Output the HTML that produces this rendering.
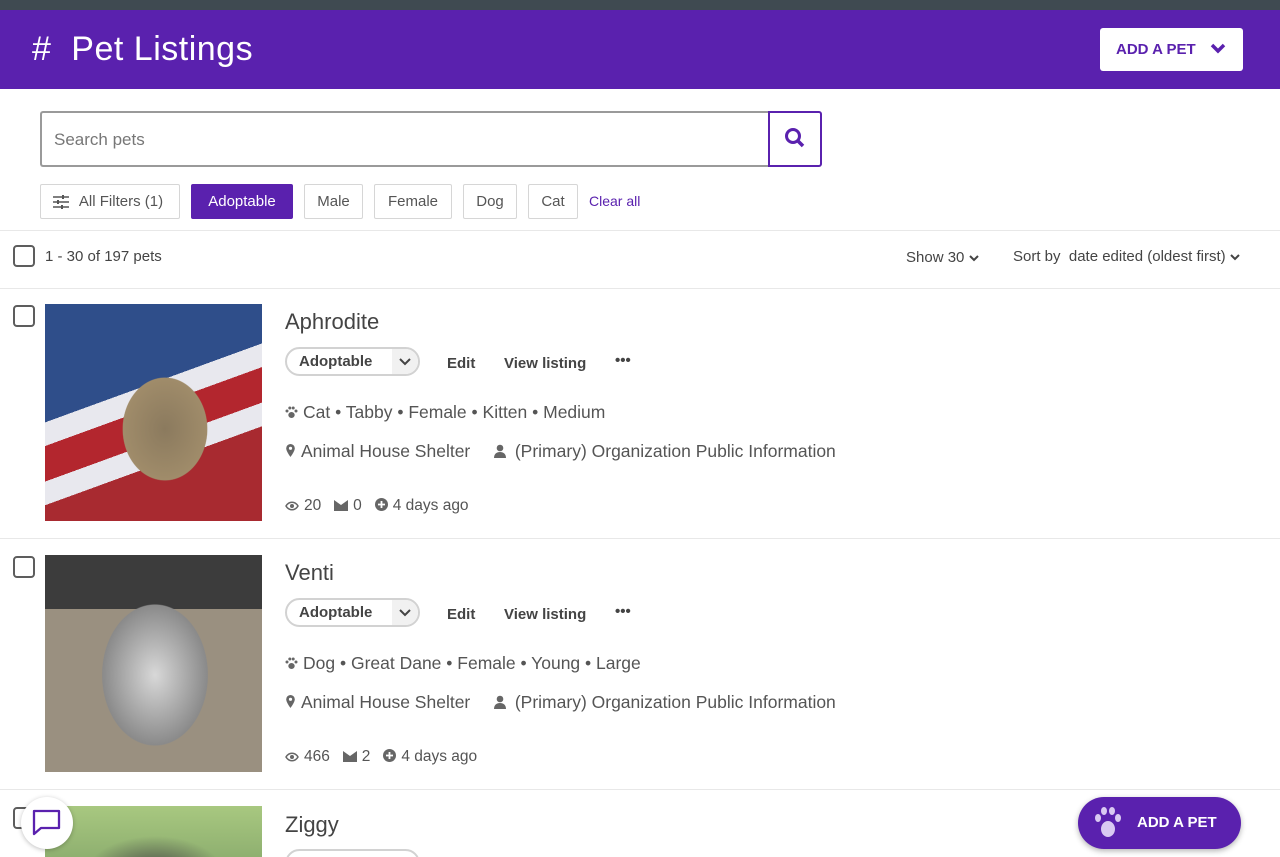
<!DOCTYPE html>
<html><head><meta charset="utf-8"><style>
*{box-sizing:border-box;margin:0;padding:0}
html,body{width:1280px;height:857px;overflow:hidden}
body{background:#fff;font-family:"Liberation Sans",sans-serif;color:#4d4751;position:relative}
.top{position:absolute;left:0;top:0;width:1280px;height:10px;background:#3f4a51}
.hdr{position:absolute;left:0;top:10px;width:1280px;height:79px;background:#5a21ae;color:#fff}
.hdr h1{position:absolute;left:32px;top:20px;font-weight:normal;font-size:34px;letter-spacing:.5px}
.addbtn{position:absolute;left:1100px;top:18px;width:143px;height:43px;background:#fff;border-radius:3px;color:#5a21ae;font-weight:bold;font-size:15px;line-height:43px;padding-left:16px}
.search{position:absolute;left:40px;top:111px;width:730px;height:56px;border:2px solid #9a9a9a;border-right:none;border-radius:3px 0 0 3px;font-size:17px;color:#777;padding:17px 12px}
.sbtn{position:absolute;left:768px;top:111px;width:54px;height:56px;border:2px solid #5a21ae;border-radius:0 3px 3px 0}
.chip{position:absolute;top:184px;height:35px;border:1px solid #d6d6d6;border-radius:2px;font-size:15px;line-height:33px;text-align:center;color:#555}
.line{position:absolute;left:0;width:1280px;height:1px;background:#e8e8e8}
.cb{position:absolute;width:22px;height:22px;border:2px solid #5d5d5d;border-radius:4px}
.photo{position:absolute;left:45px;width:217px;height:217px;overflow:hidden}
.name{position:absolute;left:285px;font-size:22px;color:#444}
.pill{position:absolute;left:285px;width:135px;height:29px;border:2px solid #d2d2d2;border-radius:15px;font-size:15px;font-weight:bold;line-height:25px;padding-left:12px;color:#444;overflow:hidden}
.pill span{position:absolute;right:0;top:0;width:26px;height:25px;background:#f1f1f1;text-align:center}
.act{position:absolute;font-size:15px;font-weight:bold;color:#444}
.info{position:absolute;left:285px;font-size:17.5px;color:#555;white-space:nowrap}
.meta{position:absolute;left:285px;font-size:15.5px;color:#555;white-space:nowrap}
.i{display:inline-block;vertical-align:-1px;margin-right:5px}
</style></head><body>
<div class="top"></div>
<div class="hdr"><h1>#&nbsp; Pet Listings</h1>
<div class="addbtn">ADD A PET <svg width="16" height="12" viewBox="0 0 16 12" style="position:absolute;left:110px;top:15px"><path d="M2 2l6 6 6-6" stroke="#5a21ae" stroke-width="3.5" fill="none"/></svg></div></div>
<div class="search">Search pets</div>
<div class="sbtn"><svg width="54" height="56" viewBox="0 0 54 56" style="position:absolute;left:-2px;top:-2px"><circle cx="25" cy="25" r="6.5" stroke="#5a21ae" stroke-width="3" fill="none"/><path d="M30 30l5 5" stroke="#5a21ae" stroke-width="3.5"/></svg></div>
<div class="chip" style="left:40px;width:140px;padding-left:22px"><svg width="16" height="14" viewBox="0 0 16 14" style="position:absolute;left:12px;top:10px"><path d="M0 2h16M0 7h16M0 12h16" stroke="#555" stroke-width="1.5"/><path d="M10 0v4M5 5v4M9 10v4" stroke="#555" stroke-width="2"/></svg>All Filters (1)</div>
<div class="chip" style="left:191px;width:102px;background:#5a21ae;border-color:#5a21ae;color:#fff">Adoptable</div>
<div class="chip" style="left:304px;width:59px">Male</div>
<div class="chip" style="left:374px;width:78px">Female</div>
<div class="chip" style="left:463px;width:54px">Dog</div>
<div class="chip" style="left:528px;width:50px">Cat</div>
<div style="position:absolute;left:589px;top:193px;font-size:14px;color:#5a21ae">Clear all</div>
<div class="line" style="top:230px"></div>
<div class="cb" style="left:13px;top:245px"></div>
<div style="position:absolute;left:45px;top:248px;font-size:15px;color:#444">1 - 30 of 197 pets</div>
<div style="position:absolute;left:906px;top:249px;font-size:15px;color:#444">Show 30 <svg width="10" height="8" viewBox="0 0 10 8"><path d="M1 2l4 4 4-4" stroke="#444" stroke-width="2" fill="none"/></svg></div>
<div style="position:absolute;left:1013px;top:248px;font-size:15px;color:#444">Sort by &nbsp;date edited (oldest first) <svg width="10" height="8" viewBox="0 0 10 8"><path d="M1 2l4 4 4-4" stroke="#444" stroke-width="2" fill="none"/></svg></div>
<div class="line" style="top:288px"></div>

<div class="cb" style="left:13px;top:305px"></div>
<div class="photo" style="top:304px;background:radial-gradient(ellipse 70px 85px at 120px 125px,#8b7a5e,#a08c6a 60%,transparent 61%),linear-gradient(160deg,#2f4e8a 0 40%,#e8e8ee 40% 48%,#b3262e 48% 60%,#e8e8ee 60% 68%,#a82a30 68%)"></div>
<div class="name" style="top:309px">Aphrodite</div>
<div class="pill" style="top:347px">Adoptable<span><svg width="12" height="8" viewBox="0 0 12 8"><path d="M1 1l5 5 5-5" stroke="#444" stroke-width="2" fill="none"/></svg></span></div>
<div class="act" style="left:447px;top:355px">Edit</div><div class="act" style="left:504px;top:355px">View listing</div><div class="act" style="left:615px;top:352px">•••</div>
<div class="info" style="top:402px"><svg class="i" width="13" height="13" viewBox="0 0 13 13" fill="#666"><ellipse cx="6.5" cy="9" rx="3.2" ry="3"/><circle cx="2" cy="5" r="1.5"/><circle cx="4.8" cy="2" r="1.5"/><circle cx="8.2" cy="2" r="1.5"/><circle cx="11" cy="5" r="1.5"/></svg>Cat • Tabby • Female • Kitten • Medium</div>
<div class="info" style="top:441px"><svg class="i" width="11" height="15" viewBox="0 0 11 15"><path d="M5.5 1a4.3 4.3 0 0 1 4.3 4.3C9.8 8.5 5.5 14 5.5 14S1.2 8.5 1.2 5.3A4.3 4.3 0 0 1 5.5 1z" fill="#666"/><circle cx="5.5" cy="5.3" r="1.6" fill="#fff"/></svg>Animal House Shelter &nbsp; <svg class="i" width="14" height="14" viewBox="0 0 14 14" fill="#666" style="margin:0 8px 0 8px"><circle cx="7" cy="4" r="3.3"/><path d="M1 14c0-4 2.5-6 6-6s6 2 6 6z"/></svg>(Primary) Organization Public Information</div>
<div class="meta" style="top:497px"><svg class="i" width="14" height="10" viewBox="0 0 14 10"><path d="M1 5c3-5 9-5 12 0-3 5-9 5-12 0z" stroke="#666" stroke-width="1.5" fill="none"/><circle cx="7" cy="5" r="2" fill="#666"/></svg>20 &nbsp; <svg class="i" width="14" height="11" viewBox="0 0 14 11" fill="#666"><path d="M0 0l7 5 7-5v11H0z"/></svg>0 &nbsp; <svg class="i" width="13" height="13" viewBox="0 0 13 13"><circle cx="6.5" cy="6.5" r="6.5" fill="#666"/><path d="M6.5 3v7M3 6.5h7" stroke="#fff" stroke-width="1.8"/></svg>4 days ago</div>
<div class="line" style="top:538px"></div>

<div class="cb" style="left:13px;top:556px"></div>
<div class="photo" style="top:555px;background:radial-gradient(ellipse 75px 100px at 110px 120px,#d8d8d8,#8a8a8a 70%,transparent 71%),linear-gradient(180deg,#3c3c3c 0 25%,#9a9080 25%)"></div>
<div class="name" style="top:560px">Venti</div>
<div class="pill" style="top:598px">Adoptable<span><svg width="12" height="8" viewBox="0 0 12 8"><path d="M1 1l5 5 5-5" stroke="#444" stroke-width="2" fill="none"/></svg></span></div>
<div class="act" style="left:447px;top:606px">Edit</div><div class="act" style="left:504px;top:606px">View listing</div><div class="act" style="left:615px;top:603px">•••</div>
<div class="info" style="top:653px"><svg class="i" width="13" height="13" viewBox="0 0 13 13" fill="#666"><ellipse cx="6.5" cy="9" rx="3.2" ry="3"/><circle cx="2" cy="5" r="1.5"/><circle cx="4.8" cy="2" r="1.5"/><circle cx="8.2" cy="2" r="1.5"/><circle cx="11" cy="5" r="1.5"/></svg>Dog • Great Dane • Female • Young • Large</div>
<div class="info" style="top:692px"><svg class="i" width="11" height="15" viewBox="0 0 11 15"><path d="M5.5 1a4.3 4.3 0 0 1 4.3 4.3C9.8 8.5 5.5 14 5.5 14S1.2 8.5 1.2 5.3A4.3 4.3 0 0 1 5.5 1z" fill="#666"/><circle cx="5.5" cy="5.3" r="1.6" fill="#fff"/></svg>Animal House Shelter &nbsp; <svg class="i" width="14" height="14" viewBox="0 0 14 14" fill="#666" style="margin:0 8px 0 8px"><circle cx="7" cy="4" r="3.3"/><path d="M1 14c0-4 2.5-6 6-6s6 2 6 6z"/></svg>(Primary) Organization Public Information</div>
<div class="meta" style="top:748px"><svg class="i" width="14" height="10" viewBox="0 0 14 10"><path d="M1 5c3-5 9-5 12 0-3 5-9 5-12 0z" stroke="#666" stroke-width="1.5" fill="none"/><circle cx="7" cy="5" r="2" fill="#666"/></svg>466 &nbsp; <svg class="i" width="14" height="11" viewBox="0 0 14 11" fill="#666"><path d="M0 0l7 5 7-5v11H0z"/></svg>2 &nbsp; <svg class="i" width="13" height="13" viewBox="0 0 13 13"><circle cx="6.5" cy="6.5" r="6.5" fill="#666"/><path d="M6.5 3v7M3 6.5h7" stroke="#fff" stroke-width="1.8"/></svg>4 days ago</div>
<div class="line" style="top:789px"></div>

<div class="cb" style="left:13px;top:807px"></div>
<div class="photo" style="top:806px;height:51px;background:radial-gradient(ellipse 70px 40px at 110px 70px,#444,transparent),linear-gradient(#a8c880,#8fb070)"></div>
<div class="name" style="top:812px">Ziggy</div>
<div class="pill" style="top:849px"></div>
<div style="position:absolute;left:21px;top:797px;width:52px;height:52px;border-radius:50%;background:#fff;box-shadow:0 1px 5px rgba(0,0,0,.25)"><svg width="52" height="52" viewBox="0 0 52 52"><path d="M13 14h25v17H20l-7 6z" stroke="#5a21ae" stroke-width="2.3" fill="none" stroke-linejoin="round"/></svg></div>
<div style="position:absolute;left:1078px;top:797px;width:163px;height:52px;border-radius:26px;background:#5a21ae;box-shadow:0 2px 6px rgba(0,0,0,.3);color:#fff;font-weight:bold;font-size:15px;line-height:52px;padding-left:59px">ADD A PET
<svg width="36" height="36" viewBox="0 0 36 36" style="position:absolute;left:12px;top:8px"><g fill="#d9c9f2"><ellipse cx="18" cy="24" rx="7" ry="8"/><ellipse cx="8" cy="13" rx="3" ry="4"/><ellipse cx="14" cy="6" rx="3" ry="4"/><ellipse cx="22" cy="6" rx="3" ry="4"/><ellipse cx="28" cy="13" rx="3" ry="4"/></g></svg></div>
</body></html>
